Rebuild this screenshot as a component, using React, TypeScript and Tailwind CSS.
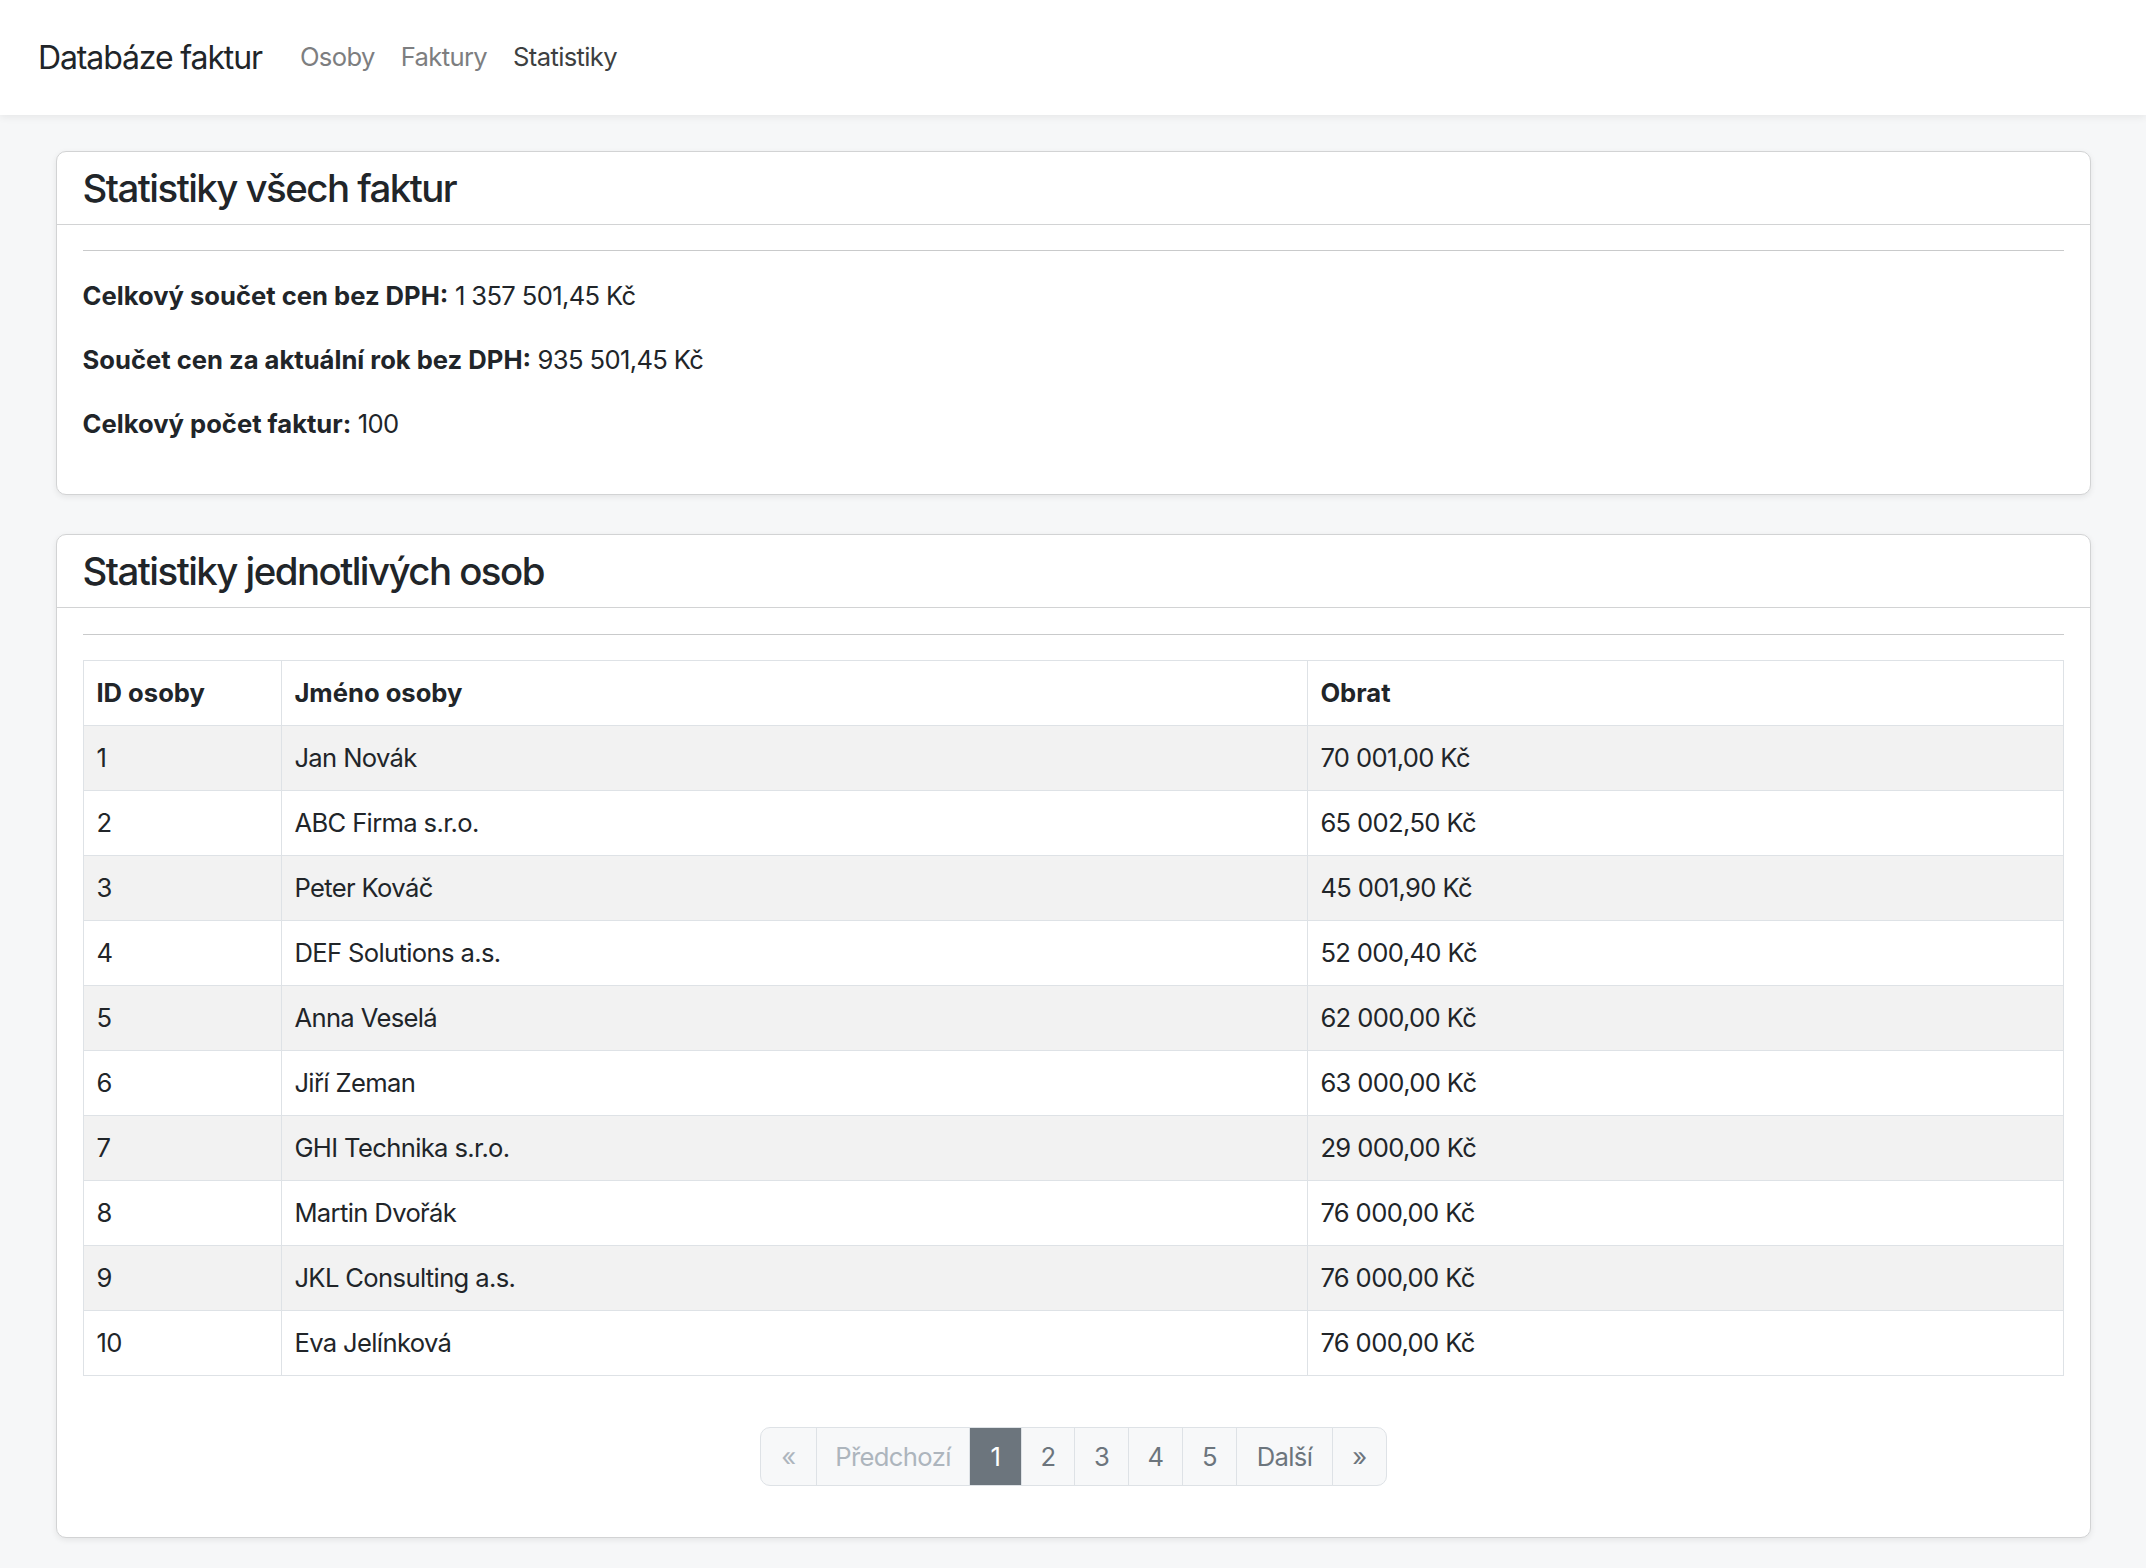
import React from 'react';

const rows = [
    { id: 1, name: 'Jan Novák', revenue: '70 001,00 Kč' },
    { id: 2, name: 'ABC Firma s.r.o.', revenue: '65 002,50 Kč' },
    { id: 3, name: 'Peter Kováč', revenue: '45 001,90 Kč' },
    { id: 4, name: 'DEF Solutions a.s.', revenue: '52 000,40 Kč' },
    { id: 5, name: 'Anna Veselá', revenue: '62 000,00 Kč' },
    { id: 6, name: 'Jiří Zeman', revenue: '63 000,00 Kč' },
    { id: 7, name: 'GHI Technika s.r.o.', revenue: '29 000,00 Kč' },
    { id: 8, name: 'Martin Dvořák', revenue: '76 000,00 Kč' },
    { id: 9, name: 'JKL Consulting a.s.', revenue: '76 000,00 Kč' },
    { id: 10, name: 'Eva Jelínková', revenue: '76 000,00 Kč' }
];

const Card = ({ title, children }: { title: string; children: React.ReactNode }) => (
    <div className="bg-white border border-[#d2d3d4] rounded-[10px] shadow-[0_2px_6px_rgba(0,0,0,0.08)]">
        <div className="px-[25.6px] py-[12.8px] border-b border-[#d2d3d4]">
            <h4 className="text-[38.4px] leading-[1.2] font-medium tracking-[-0.04em] text-[#212529]">{title}</h4>
        </div>
        <div className="p-[25.6px]">
            <hr className="border-t border-[#c9cacb] mb-[25.6px]" />
            {children}
        </div>
    </div>
);

const PageItem = ({
    label,
    active = false,
    disabled = false,
    first = false,
    last = false,
    width
}: {
    label: string;
    active?: boolean;
    disabled?: boolean;
    first?: boolean;
    last?: boolean;
    width: string;
}) => (
    <span
        className={`flex items-center justify-center h-[59px] border border-[#dee2e6] -ml-px
            ${first ? 'rounded-l-[10px] ml-0' : ''} ${last ? 'rounded-r-[10px]' : ''}
            ${active ? 'bg-[#6c757d] border-[#6c757d] text-white' : 'bg-[#f7f8f9]'}
            ${disabled ? 'text-[#adb5bd]' : active ? '' : 'text-[#6c757d]'} ${width}`}
    >
        {label}
    </span>
);

export default function App() {
    return (
        <div className="min-h-screen bg-[#f6f7f8] text-[#212529] text-[25.6px] leading-[1.5] tracking-[-0.025em] font-['Inter',sans-serif] pb-[32px]">
            <nav className="h-[115px] bg-white shadow-[0_2px_8px_rgba(0,0,0,0.07)] flex items-center px-[38px]">
                <span className="text-[32px] tracking-[-0.035em] text-[#212529] mr-[38px]">Databáze faktur</span>
                <div className="flex gap-[26px] text-[25.6px]">
                    <span className="text-[#7d7e80]">Osoby</span>
                    <span className="text-[#7d7e80]">Faktury</span>
                    <span className="text-[#3d3f41]">Statistiky</span>
                </div>
            </nav>

            <main className="pl-[56px] pr-[55px] pt-[36px] flex flex-col gap-[39px]">
                <Card title="Statistiky všech faktur">
                    <p className="mb-[25.6px]"><b className="font-bold tracking-normal">Celkový součet cen bez DPH:</b> 1 357 501,45 Kč</p>
                    <p className="mb-[25.6px]"><b className="font-bold tracking-normal">Součet cen za aktuální rok bez DPH:</b> 935 501,45 Kč</p>
                    <p className="mb-[25.6px]"><b className="font-bold tracking-normal">Celkový počet faktur:</b> 100</p>
                </Card>

                <Card title="Statistiky jednotlivých osob">
                    <table className="w-full border-collapse">
                        <thead>
                            <tr className="h-[65px] bg-white">
                                <th className="w-[198px] border border-[#dee2e6] px-[12.8px] text-left font-bold tracking-normal">ID osoby</th>
                                <th className="w-[1026px] border border-[#dee2e6] px-[12.8px] text-left font-bold tracking-normal">Jméno osoby</th>
                                <th className="border border-[#dee2e6] px-[12.8px] text-left font-bold tracking-normal">Obrat</th>
                            </tr>
                        </thead>
                        <tbody>
                            {rows.map((row, idx) => (
                                <tr key={row.id} className={`h-[65px] ${idx % 2 === 0 ? 'bg-[#f2f2f2]' : 'bg-white'}`}>
                                    <td className="border border-[#dee2e6] px-[12.8px]">{row.id}</td>
                                    <td className="border border-[#dee2e6] px-[12.8px]">{row.name}</td>
                                    <td className="border border-[#dee2e6] px-[12.8px]">{row.revenue}</td>
                                </tr>
                            ))}
                        </tbody>
                    </table>

                    <div className="flex justify-center mt-[51px] mb-[25.6px]">
                        <PageItem label="«" disabled first width="w-[57px]" />
                        <PageItem label="Předchozí" disabled width="w-[154px]" />
                        <PageItem label="1" active width="w-[53px]" />
                        <PageItem label="2" width="w-[54px]" />
                        <PageItem label="3" width="w-[55px]" />
                        <PageItem label="4" width="w-[55px]" />
                        <PageItem label="5" width="w-[55px]" />
                        <PageItem label="Další" width="w-[97px]" />
                        <PageItem label="»" last width="w-[55px]" />
                    </div>
                </Card>
            </main>
        </div>
    );
}
